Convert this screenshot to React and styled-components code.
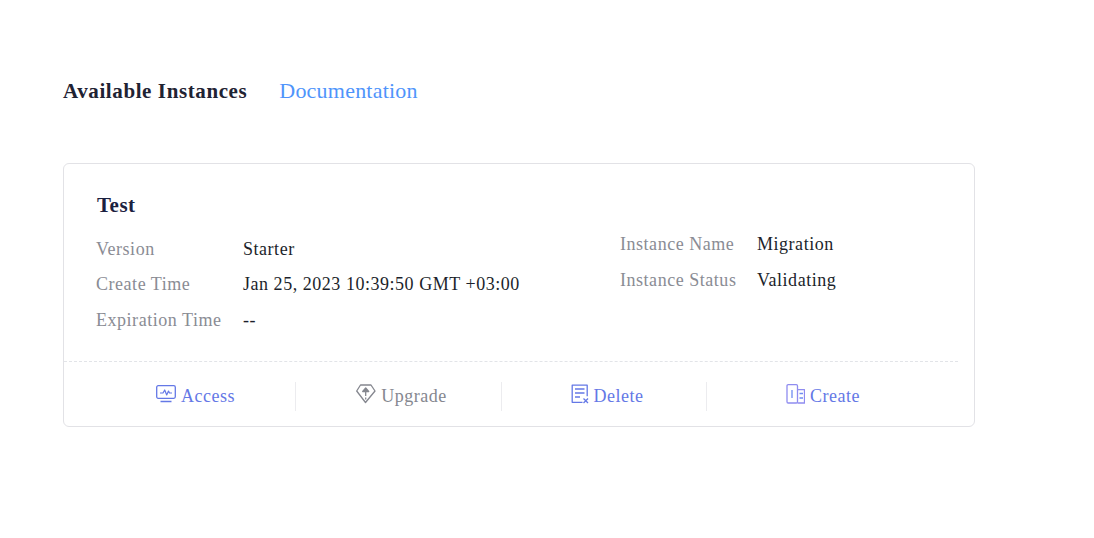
import React from "react";
import styled, { createGlobalStyle } from "styled-components";

const Global = createGlobalStyle`
  html, body { margin: 0; padding: 0; background: #fff; }
  body { font-family: "Liberation Serif", "Times New Roman", serif; }
`;

const Page = styled.div`
  width: 1094px;
  height: 538px;
  box-sizing: border-box;
  padding: 76px 0 0 63px;
`;
const Header = styled.div`
  display: flex;
  align-items: center;
  gap: 32px;
  height: 30px;
`;
const Title = styled.h2`
  margin: 0;
  font-size: 21px;
  font-weight: 700;
  letter-spacing: 0.6px;
  color: #1f2333;
`;
const DocLink = styled.a`
  font-size: 22px;
  letter-spacing: 0.22px;
  color: #4f94fb;
`;
const Card = styled.section`
  box-sizing: border-box;
  margin-top: 57px;
  width: 912px;
  height: 264px;
  border: 1px solid #e2e2e6;
  border-radius: 6px;
  display: flex;
  flex-direction: column;
`;
const Body = styled.div`
  box-sizing: border-box;
  height: 198px;
  margin-right: 16px;
  padding: 28px 0 0 32px;
  border-bottom: 1px dashed #e2e4e8;
`;
const CardTitle = styled.h3`
  margin: 0;
  padding-left: 1px;
  font-size: 21px;
  line-height: 26px;
  font-weight: 700;
  letter-spacing: 0.5px;
  color: #1b2140;
`;
const Columns = styled.div`
  display: grid;
  grid-template-columns: 524px 1fr;
`;
const Fields = styled.dl`
  margin: ${(p) => p.$top}px 0 0;
  display: grid;
  grid-template-columns: ${(p) => p.$label}px 1fr;
  grid-template-rows: ${(p) => p.$rows};
  align-items: center;
`;
const Label = styled.dt`
  font-size: 18px;
  letter-spacing: 0.53px;
  color: #8a8c94;
`;
const Value = styled.dd`
  margin: 0;
  font-size: 18px;
  letter-spacing: 0.53px;
  color: #1c1f2b;
`;
const Footer = styled.div`
  flex: 1;
  display: grid;
  grid-template-columns: 200px 206px 205px 233px;
  padding: 4px 0 0 32px;
  align-items: center;
`;
const Action = styled.a`
  height: 29px;
  display: flex;
  align-items: center;
  justify-content: center;
  gap: 5px;
  padding-left: ${(p) => p.$left || 0}px;
  padding-right: ${(p) => p.$right || 0}px;
  font-size: 18px;
  letter-spacing: 0.5px;
  color: ${(p) => (p.$muted ? "#85878f" : "#6478e6")};
  border-right: ${(p) => (p.$last ? "0" : "1px solid #ececef")};
`;
const Glyph = styled.svg`
  width: ${(p) => p.$w}px;
  height: 20px;
  flex: none;
  margin-top: -5px;
  fill: none;
  stroke: ${(p) => p.$stroke || "currentColor"};
  stroke-width: 1.3;
  stroke-linejoin: round;
`;

const AccessIcon = () => (
  <Glyph $w={20} viewBox="0 0 20 20">
    <rect x="0.7" y="1.7" width="18.6" height="12.6" rx="1.5" />
    <path d="M4 9h3l1.7-3 2 5 1.800-4 1 2h2.500" strokeWidth="1.2" />
    <path d="M4.500 17.500h11" strokeWidth="1.500" />
  </Glyph>
);
const UpgradeIcon = () => (
  <Glyph $w={20} $stroke="#85878f" viewBox="0 0 20 20">
    <path d="M4.500 1h10.500l4 6-9.500 11.500L0.700 7z" />
    <path d="M9.700 4l3 3.500h-6zM9.700 7v5M9.700 13.500v2" fill="currentColor" />
  </Glyph>
);
const DeleteIcon = () => (
  <Glyph $w={18} viewBox="0 0 18 20">
    <path d="M11.500 18.300H1.200V1.200h15v11" />
    <path d="M4 5h9.500M4 9h9.500M4 13h5" />
    <path d="M12.500 14.500l4.500 4.500M17 14.500L12.500 19" />
  </Glyph>
);
const CreateIcon = () => (
  <Glyph $w={19} $stroke="#8f8cf0" viewBox="0 0 19 20">
    <rect x="1" y="0.700" width="10.500" height="18.300" rx="1.200" />
    <path d="M11.500 5.700h7v13.300h-7" />
    <path d="M6 6v8M13.500 9.500h3.500M13.500 14h3.500" stroke="#6f8df2" />
  </Glyph>
);

export default function App() {
  return (
    <Page>
      <Global />
      <Header>
        <Title>Available Instances</Title>
        <DocLink>Documentation</DocLink>
      </Header>
      <Card>
        <Body>
          <CardTitle>Test</CardTitle>
          <Columns>
            <Fields $top={14} $label={147} $rows="35px 35px 36px">
              <Label>Version</Label>
              <Value>Starter</Value>
              <Label>Create Time</Label>
              <Value>Jan 25, 2023 10:39:50 GMT +03:00</Value>
              <Label>Expiration Time</Label>
              <Value>--</Value>
            </Fields>
            <Fields $top={8} $label={137} $rows="36px 36px">
              <Label>Instance Name</Label>
              <Value>Migration</Value>
              <Label>Instance Status</Label>
              <Value>Validating</Value>
            </Fields>
          </Columns>
        </Body>
        <Footer>
          <Action><AccessIcon />Access</Action>
          <Action $muted $left={6}><UpgradeIcon />Upgrade</Action>
          <Action $left={6}><DeleteIcon />Delete</Action>
          <Action $last $right={1}><CreateIcon />Create</Action>
        </Footer>
      </Card>
    </Page>
  );
}
